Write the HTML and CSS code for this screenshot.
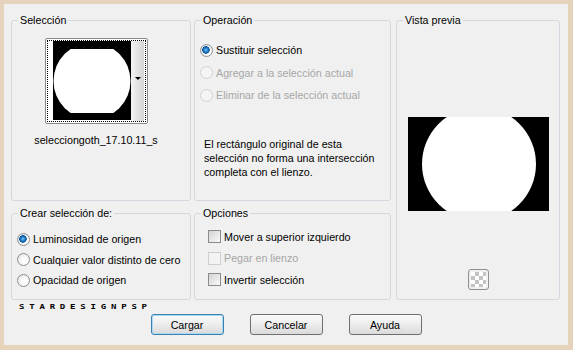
FILE: index.html
```html
<!DOCTYPE html>
<html lang="es">
<head>
  <meta charset="UTF-8" />
  <title>Cargar selección desde canal alfa</title>
  <link rel="stylesheet" href="styles.css">
</head>
<body>
  <div class="dialog">
    <div class="panels">
      <fieldset class="group group-sel">
        <legend>Selección</legend>
        <div class="sel-body">
          <div class="thumb">
            <div class="thumb-focus">
              <svg class="thumb-img" width="78" height="79" viewBox="0 0 78 79">
                <rect width="78" height="79" fill="#000" />
                <circle cx="39" cy="40" r="38.5" fill="#fff" />
                <rect width="78" height="8" fill="#000" />
                <rect y="72" width="78" height="7" fill="#000" />
              </svg>
              <div class="thumb-strip"><span class="arrow"></span></div>
            </div>
          </div>
          <div class="thumb-name">selecciongoth_17.10.11_s</div>
        </div>
      </fieldset>

      <fieldset class="group group-op">
        <legend>Operación</legend>
        <div class="op-body">
          <div class="opt"><span class="radio checked"></span>Sustituir selección</div>
          <div class="opt disabled"><span class="radio"></span>Agregar a la selección actual</div>
          <div class="opt disabled"><span class="radio"></span>Eliminar de la selección actual</div>
          <p class="note">El rectángulo original de esta<br>selección no forma una intersección<br>completa con el lienzo.</p>
        </div>
      </fieldset>

      <fieldset class="group group-preview">
        <legend>Vista previa</legend>
        <div class="preview-body">
          <svg class="preview-img" width="141" height="94" viewBox="0 0 141 94">
            <rect width="141" height="94" fill="#000" />
            <circle cx="71" cy="47" r="57" fill="#fff" />
          </svg>
          <div class="checker-btn"></div>
        </div>
      </fieldset>

      <fieldset class="group group-src">
        <legend>Crear selección de:</legend>
        <div class="src-body">
          <div class="opt"><span class="radio checked"></span>Luminosidad de origen</div>
          <div class="opt"><span class="radio"></span>Cualquier valor distinto de cero</div>
          <div class="opt"><span class="radio"></span>Opacidad de origen</div>
        </div>
      </fieldset>

      <fieldset class="group group-opts">
        <legend>Opciones</legend>
        <div class="opts-body">
          <div class="opt"><span class="check"></span>Mover a superior izquierdo</div>
          <div class="opt disabled"><span class="check"></span>Pegar en lienzo</div>
          <div class="opt"><span class="check"></span>Invertir selección</div>
        </div>
      </fieldset>
    </div>

    <div class="mark">STARDESIGNPSP</div>

    <div class="buttons">
      <button class="default">Cargar</button>
      <button>Cancelar</button>
      <button>Ayuda</button>
    </div>
  </div>
</body>
</html>
```

FILE: styles.css
```css
:root {
  --frame-color: #e6d3bb;
  --dialog-color: #f0f0f0;
  --group-border: #d3d8de;
  --disabled-text: #a7a7a7;
  --font-family: "Liberation Sans", Arial, sans-serif;
}

body {
  margin: 0;
  width: 573px;
  height: 350px;
  background-color: var(--frame-color);
  font-family: var(--font-family);
  font-size: 10.7px;
  color: #000;
  overflow: hidden;
}

.dialog {
  margin: 4px 5px 5px 4px;
  height: 341px;
  background-color: var(--dialog-color);
  box-sizing: border-box;
  padding: 10px 0 0 7px;
}

.panels {
  display: grid;
  grid-template-columns: 180px 197px 166px;
  grid-template-rows: 187px 93px;
  column-gap: 3px;
  row-gap: 6px;
}

.group {
  margin: 0;
  padding: 0;
  min-width: 0;
  border: 1px solid var(--group-border);
  border-radius: 3px;
}

.group legend {
  margin-left: 6px;
  padding: 0 2px;
  line-height: 13px;
}

.group-preview {
  grid-column: 3;
  grid-row: 1 / span 2;
  margin-left: 2px;
}

/* Selección */
.sel-body {
  padding-right: 10px;
  text-align: center;
}

.thumb {
  width: 103px;
  height: 86px;
  margin: 11px auto 0;
  box-sizing: border-box;
  border: 1px solid #8a8a8a;
  border-radius: 2px;
  padding: 1px;
  background: #fff;
}

.thumb-focus {
  display: flex;
  height: 100%;
  box-sizing: border-box;
  border: 1px dotted #000;
  padding-left: 5px;
}

.thumb-img {
  display: block;
}

.thumb-strip {
  width: 13px;
  background: linear-gradient(to right, #f4f4f4, #d4d4d4);
  position: relative;
}

.arrow {
  position: absolute;
  left: 4px;
  top: 36px;
  border-left: 3px solid transparent;
  border-right: 3px solid transparent;
  border-top: 3px solid #000;
}

.thumb-name {
  margin-top: 10px;
}

/* radios / checks */
.opt {
  display: flex;
  align-items: center;
  height: 22.5px;
  white-space: nowrap;
}

.opt.disabled {
  color: var(--disabled-text);
}

.radio {
  width: 13px;
  height: 13px;
  box-sizing: border-box;
  margin-right: 3px;
  border-radius: 50%;
  border: 1px solid #8d9092;
  background: radial-gradient(circle at 60% 60%, #fdfdfd 30%, #dcdcdc 100%);
}

.radio.checked {
  background:
    radial-gradient(circle at 45% 45%, #7cc4f4 0, #1f80cf 2px, #0b4f96 3.5px, transparent 4px),
    radial-gradient(circle at 60% 60%, #fdfdfd 30%, #dcdcdc 100%);
}

.disabled .radio {
  border-color: #cfd1d2;
  background: #f4f4f4;
}

.check {
  width: 13px;
  height: 13px;
  box-sizing: border-box;
  margin-right: 3px;
  border: 1px solid #8a8c8e;
  background: linear-gradient(135deg, #d2d2d2, #f6f6f6 90%);
}

.disabled .check {
  border-color: #cdcfd1;
  background: #f3f3f3;
}

/* Operación */
.op-body {
  padding: 12px 0 0 5px;
}

.note {
  margin: 30px 0 0 4px;
  line-height: 14.3px;
}

/* Crear selección de */
.src-body {
  padding: 9px 0 0 5px;
}

.src-body .opt {
  height: 20.5px;
}

/* Opciones */
.opts-body {
  padding: 6px 0 0 13px;
}

.opts-body .opt {
  height: 21.5px;
}

/* Vista previa */
.preview-body {
  display: flex;
  flex-direction: column;
  align-items: center;
}

.preview-img {
  display: block;
  margin-top: 90px;
}

.checker-btn {
  width: 21px;
  height: 21px;
  margin-top: 58px;
  box-sizing: border-box;
  border: 1px solid #8f8f8f;
  border-radius: 3px;
  padding: 2px;
  background: repeating-conic-gradient(#c3c3c3 0 25%, #fff 0 50%) 2px 2px / 8px 8px;
  background-clip: content-box;
  background-color: #fafafa;
}

/* footer */
.mark {
  margin: 3px 0 0 8px;
  height: 8px;
  line-height: 8px;
  font-family: "DejaVu Sans Mono", monospace;
  font-size: 9px;
  font-weight: bold;
  letter-spacing: 4.8px;
  transform: scaleY(0.75);
  transform-origin: left center;
}

.buttons {
  display: flex;
  justify-content: center;
  gap: 26px;
  margin-top: 3px;
  padding-right: 7px;
}

button {
  width: 73px;
  height: 21px;
  padding: 0;
  font-family: var(--font-family);
  font-size: 10.7px;
  color: #000;
  border: 1px solid #707070;
  border-radius: 3px;
  background: linear-gradient(#fbfbfb, #ececec 50%, #dadada);
}

button.default {
  border-color: #3c7fb1;
  box-shadow: inset 0 0 0 1px #a9d9f6;
}
```
